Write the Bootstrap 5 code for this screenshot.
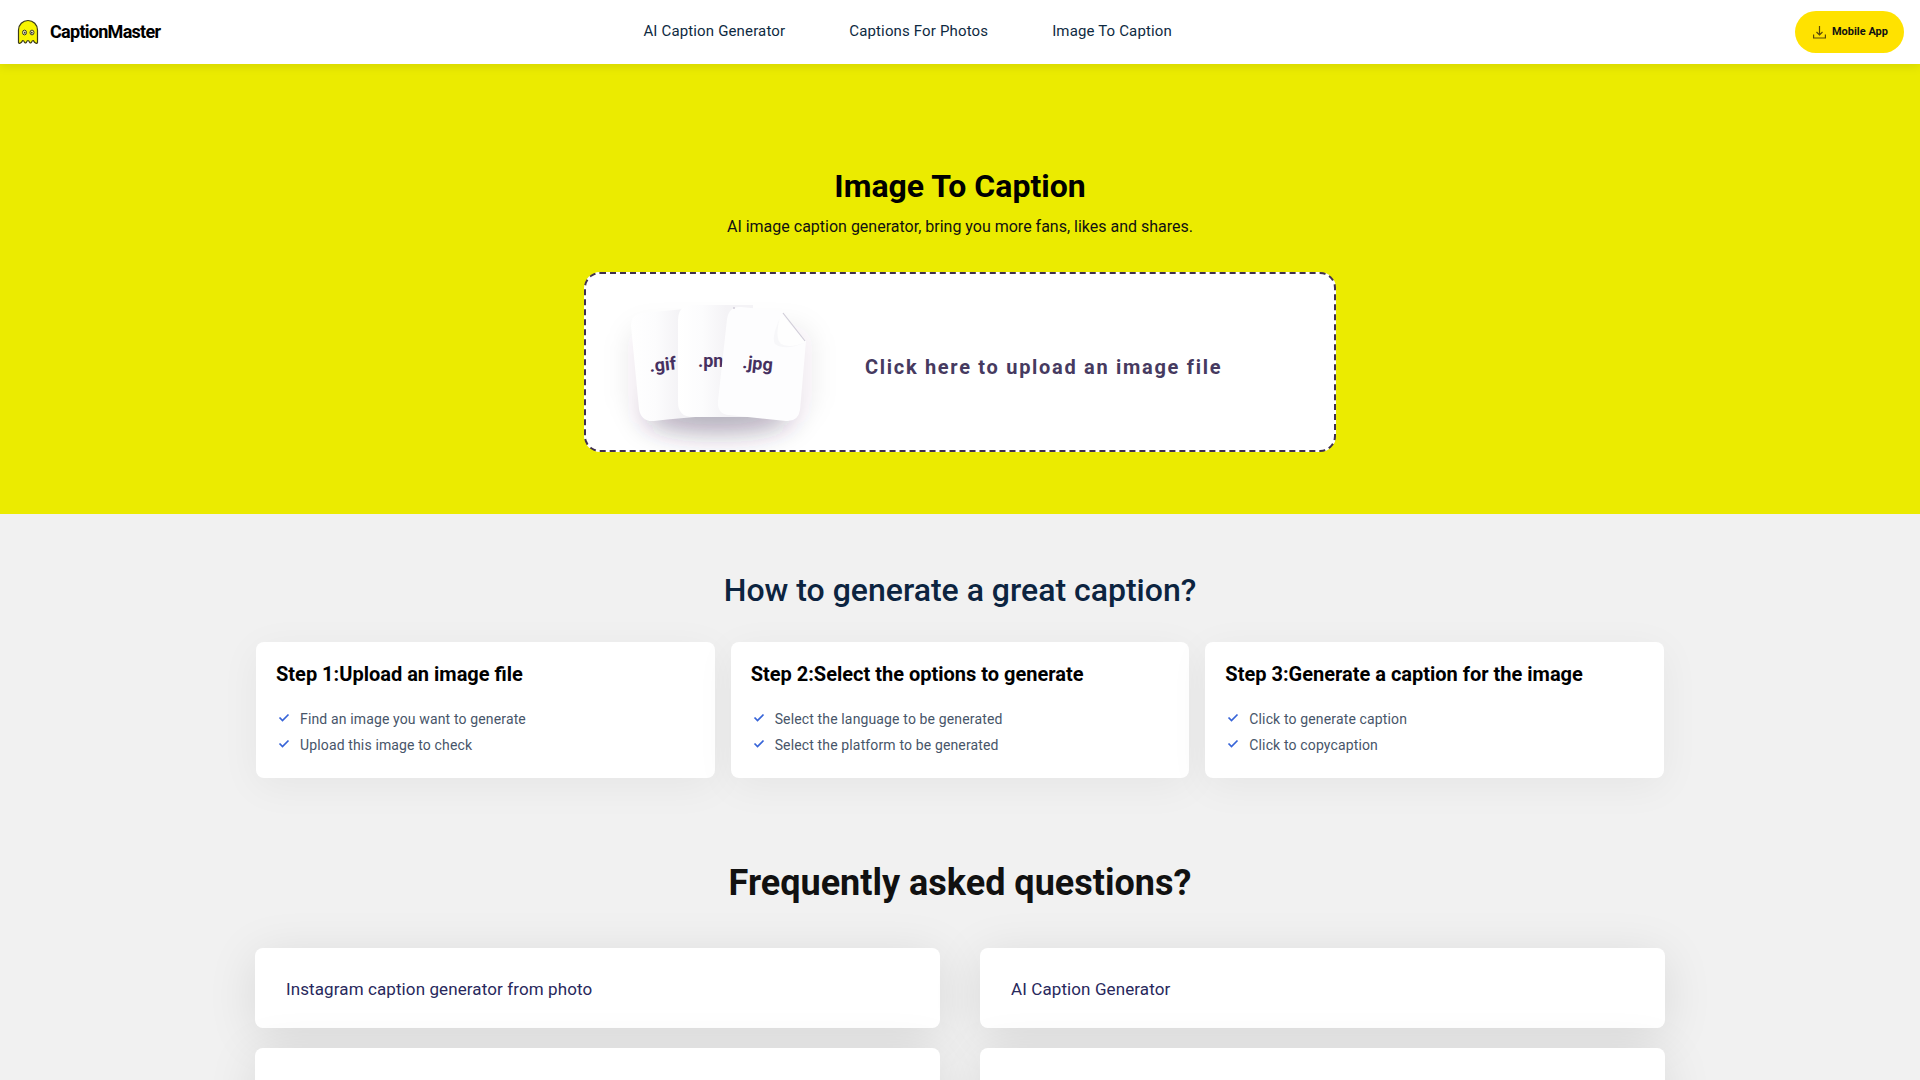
<!DOCTYPE html>
<html lang="en">
<head>
<meta charset="utf-8">
<meta name="viewport" content="width=device-width, initial-scale=1">
<title>CaptionMaster</title>
<link href="https://cdn.jsdelivr.net/npm/bootstrap@5.3.0/dist/css/bootstrap.min.css" rel="stylesheet">
<style>
body{font-family:Roboto,"Liberation Sans",sans-serif;background:#f1f1f1;color:#000}
.site-header{min-height:64px;box-shadow:0 2px 10px rgba(0,0,0,.1);z-index:2}
.side-start{flex:6 1 0}
.side-end{flex:7 1 0}
.brand{gap:10px;font-size:18px;line-height:24px;font-weight:700;letter-spacing:-.04em;color:#000}
.site-nav{gap:64px;padding-bottom:2px}
.site-nav .nav-link{font-size:15px;line-height:24px;color:#0e2a42;letter-spacing:.01em}
.app-btn{height:42px;gap:6px;padding:0 16px 0 18px;font-size:11px;font-weight:700;background:#ffe200;color:#111;border:0}
.hero{background:#ebeb00;padding:98px 16px 62px}
.hero h1{font-size:32px;line-height:48px;font-weight:700}
.hero-text{font-size:16px;line-height:26px;color:#111}
.upload{max-width:752px;min-height:180px;border:2px dashed #40304f;border-radius:16px;color:#463a60;cursor:pointer}
.upload-text{font-size:20px;line-height:28px;font-weight:700;letter-spacing:.085em;margin-left:23px;padding-top:10px}
.wrap{max-width:1440px}
.wrap-wide{max-width:1442px}
.how-title{font-size:32px;line-height:48px;font-weight:500;color:#0c2440}
.tile{border:0;border-radius:8px}
.step{padding:16px 20px 22px;box-shadow:0 8px 40px rgba(0,0,0,.05)}
.step h3{font-size:20px;line-height:32px;font-weight:700;margin-bottom:18px}
.step li{font-size:14px;line-height:22px;color:#475569;letter-spacing:.01em}
.faq-title{font-size:36px;line-height:50px;font-weight:700;color:#111}
.faq-row{--bs-gutter-x:40px;--bs-gutter-y:20px}
.faq{min-height:80px;padding:28px 31px 24px;box-shadow:0 8px 50px rgba(0,0,0,.1)}
.faq a{font-size:17px;line-height:26px;color:#28285c;letter-spacing:.006em}
</style>
</head>
<body>
<header class="site-header bg-white position-relative d-flex align-items-center px-3">
  <div class="side-start d-flex"><a class="brand d-flex align-items-center text-decoration-none" href="#">
    <svg width="24" height="26" viewBox="0 0 24 26" aria-hidden="true"><path d="M2.500 23.500V11a9.500 9.500 0 0 1 19 0v12.500q-.3 1-1.500.8-1.800-.8-2.600-2.800-1.400 0-1.700 1.500-.7 1.500-2 .5-1-2-1.700-2-.9 0-1.700 2-1.300 1-2-.5-.3-1.500-1.700-1.500-.8 2-2.600 2.800-1.200.2-1.500-.8z" fill="#f8f500" stroke="#3c3c18" stroke-width="1.200" stroke-linejoin="round"/><g fill="#f8f5b0" stroke="#3c3c28" stroke-width="1"><ellipse cx="8.500" cy="13.500" rx="2" ry="2.400"/><ellipse cx="16" cy="13.500" rx="2" ry="2.400"/></g><g fill="#303040"><circle cx="8.700" cy="13.700" r=".9"/><circle cx="15.800" cy="13.700" r=".9"/></g></svg>
    CaptionMaster</a></div>
  <nav class="site-nav nav" aria-label="Main">
    <a class="nav-link p-0" href="#">AI Caption Generator</a>
    <a class="nav-link p-0" href="#">Captions For Photos</a>
    <a class="nav-link p-0" href="#">Image To Caption</a>
  </nav>
  <div class="side-end d-flex justify-content-end">
    <button type="button" class="app-btn btn rounded-pill d-flex align-items-center">
      <svg width="13" height="13" viewBox="0 0 13 13" fill="none" stroke="#5c4a08" stroke-width="1.200" aria-hidden="true"><path d="M6.500 0v9M3.500 6l3 3 3-3M.6 8.500v3.500h11.800V8.500"/></svg>
      Mobile App</button>
  </div>
</header>
<main>
  <section class="hero">
    <h1 class="text-center mb-1">Image To Caption</h1>
    <p class="hero-text text-center mb-4 pb-2">AI image caption generator, bring you more fans, likes and shares.</p>
    <label class="upload bg-white d-flex align-items-center mx-auto" for="image-file">
      <svg width="256" height="176" viewBox="0 0 256 176" aria-hidden="true">
        <defs>
          <filter id="soft" x="-50%" y="-50%" width="200%" height="200%"><feGaussianBlur stdDeviation="13"/></filter>
          <linearGradient id="back" gradientUnits="userSpaceOnUse" x1="45" y1="0" x2="95" y2="0"><stop offset="0" stop-color="#fff"/><stop offset=".5" stop-color="#fcfcfd"/><stop offset="1" stop-color="#f3f2f5"/></linearGradient>
          <linearGradient id="middle" gradientUnits="userSpaceOnUse" x1="92" y1="0" x2="140" y2="0"><stop offset="0" stop-color="#fff"/><stop offset=".5" stop-color="#fcfcfd"/><stop offset="1" stop-color="#f4f3f6"/></linearGradient>
        </defs>
        <g filter="url(#soft)" fill="#382850"><ellipse cx="132" cy="142" rx="74" ry="18" opacity=".36"/><rect x="42" y="52" width="184" height="90" rx="20" opacity=".08"/></g>
        <g font-family="Roboto, sans-serif" font-size="18" font-weight="700" fill="#463060">
          <path d="M56 39l54-5 14 108q-30 2-56 5-13 1-15-12L45 52q0-12 11-13z" fill="url(#back)"/>
          <text x="64" y="98" transform="rotate(-6 64 98)">.gif</text>
          <path d="M107 31h60v112h-60q-15 0-15-15V46q0-15 15-15z" fill="url(#middle)"/>
          <text x="112" y="93">.png</text>
          <path d="M155 33l41 4q6 18 24 30l-6 69q-2 12-14 11l-57-6q-12-1-11-14l9-82q2-13 14-12z" fill="#fdfdfe"/>
          <path d="M194 44q-9 20-5 26 10 7 29-1z" fill="#f7f7f9"/>
          <path d="M195 39l25 29q-16 7-25 2-7-6 0-31z" fill="#fefefe"/>
          <path d="M197 39l22 28" stroke="#d0cdd8" stroke-width="1.200" fill="none"/>
          <circle cx="148" cy="34" r="1" fill="#d0cdd8"/>
          <text x="156" y="94" transform="rotate(6 156 94)">.jpg</text>
        </g>
      </svg>
      <span class="upload-text">Click here to upload an image file</span>
      <input class="visually-hidden" type="file" id="image-file" accept="image/*">
    </label>
  </section>
  <section class="wrap container-fluid px-3 pt-5">
    <h2 class="how-title text-center mt-1 mb-4 pb-1">How to generate a great caption?</h2>
    <div class="row g-3">
      <div class="col-md-4"><div class="card tile step h-100"><h3>Step 1:Upload an image file</h3>
        <ul class="list-unstyled d-grid gap-1 mb-0">
          <li class="d-flex"><svg class="me-2" width="16" height="18" viewBox="0 0 16 18" aria-hidden="true"><path d="M3.500 9.500l3 3 6-6" fill="none" stroke="#3764d8" stroke-width="1.700"/></svg>Find an image you want to generate</li>
          <li class="d-flex"><svg class="me-2" width="16" height="18" viewBox="0 0 16 18" aria-hidden="true"><path d="M3.500 9.500l3 3 6-6" fill="none" stroke="#3764d8" stroke-width="1.700"/></svg>Upload this image to check</li>
        </ul></div></div>
      <div class="col-md-4"><div class="card tile step h-100"><h3>Step 2:Select the options to generate</h3>
        <ul class="list-unstyled d-grid gap-1 mb-0">
          <li class="d-flex"><svg class="me-2" width="16" height="18" viewBox="0 0 16 18" aria-hidden="true"><path d="M3.500 9.500l3 3 6-6" fill="none" stroke="#3764d8" stroke-width="1.700"/></svg>Select the language to be generated</li>
          <li class="d-flex"><svg class="me-2" width="16" height="18" viewBox="0 0 16 18" aria-hidden="true"><path d="M3.500 9.500l3 3 6-6" fill="none" stroke="#3764d8" stroke-width="1.700"/></svg>Select the platform to be generated</li>
        </ul></div></div>
      <div class="col-md-4"><div class="card tile step h-100"><h3>Step 3:Generate a caption for the image</h3>
        <ul class="list-unstyled d-grid gap-1 mb-0">
          <li class="d-flex"><svg class="me-2" width="16" height="18" viewBox="0 0 16 18" aria-hidden="true"><path d="M3.500 9.500l3 3 6-6" fill="none" stroke="#3764d8" stroke-width="1.700"/></svg>Click to generate caption</li>
          <li class="d-flex"><svg class="me-2" width="16" height="18" viewBox="0 0 16 18" aria-hidden="true"><path d="M3.500 9.500l3 3 6-6" fill="none" stroke="#3764d8" stroke-width="1.700"/></svg>Click to copycaption</li>
        </ul></div></div>
    </div>
  </section>
  <section class="wrap-wide container-fluid px-3 pt-5 pb-5">
    <h2 class="faq-title text-center mt-4 mb-4 pt-2 pb-3">Frequently asked questions?</h2>
    <div class="row faq-row mt-0">
      <div class="col-md-6 mt-0"><div class="card tile faq"><a class="text-decoration-none" href="#">Instagram caption generator from photo</a></div></div>
      <div class="col-md-6 mt-0"><div class="card tile faq"><a class="text-decoration-none" href="#">AI Caption Generator</a></div></div>
      <div class="col-md-6"><div class="card tile faq"></div></div>
      <div class="col-md-6"><div class="card tile faq"></div></div>
    </div>
  </section>
</main>
<script src="https://cdn.jsdelivr.net/npm/bootstrap@5.3.0/dist/js/bootstrap.bundle.min.js"></script>
</body>
</html>
